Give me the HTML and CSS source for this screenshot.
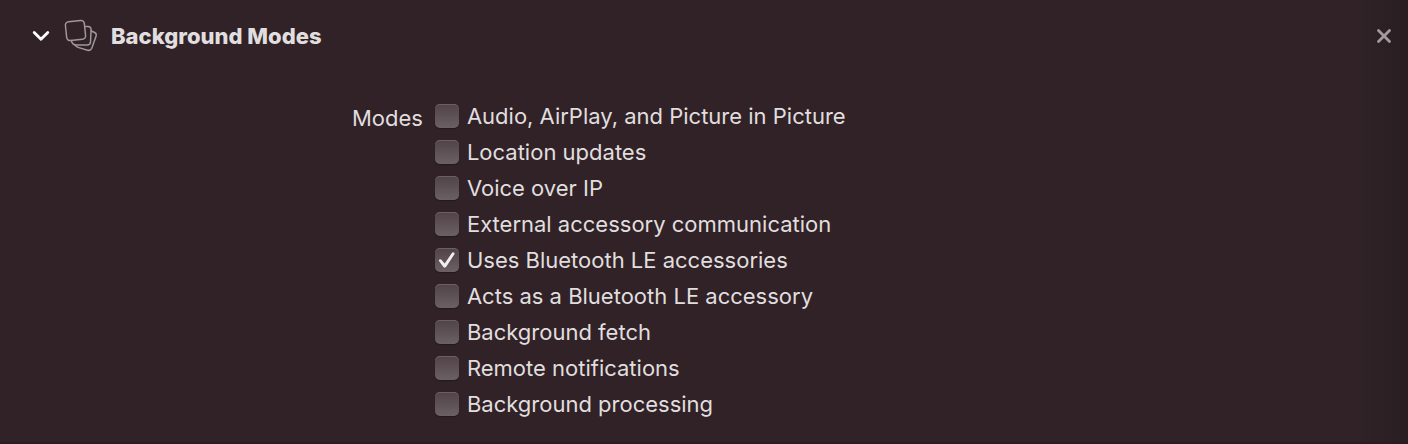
FILE: index.html
```html
<!DOCTYPE html>
<html lang="en">
<head>
<meta charset="utf-8">
<title>Background Modes</title>
<link rel="stylesheet" href="styles.css">
</head>
<body>
<section class="capability">
  <header class="header">
    <button class="icon-button toggle" type="button" aria-label="Collapse" aria-expanded="true">
      <svg width="18" height="12" viewBox="0 0 18 12" fill="none" stroke="#fff" stroke-width="2.8" stroke-linecap="round" stroke-linejoin="round"><path d="M2.200 2.400 9 9.300l6.800-6.900"/></svg>
    </button>
    <svg class="logo" width="34" height="34" viewBox="0 0 34 34" stroke="#a0979a" stroke-width="1.5" fill="none" stroke-linejoin="round" stroke-linecap="round">
      <rect x="2" y="2" width="19" height="19" rx="3.500" transform="rotate(-6 11.500 11.500)"/>
      <path d="M21.500 7.500h2.500q3.200.2 3.100 3.500l-.6 12q-.2 3-3.300 3H12q-3.500-.2-4.800-4.500"/>
      <path d="M27.200 12l3.500 1.500q2 1.200 1.400 3.500l-4.300 12.200q-1.200 2.800-4.300 2L14 28.400q-2.200-.7-3.200-2.900"/>
    </svg>
    <h1 class="title">Background Modes</h1>
    <button class="icon-button close" type="button" aria-label="Remove capability">
      <svg width="16" height="16" viewBox="0 0 16 16" fill="none" stroke="#a39b9e" stroke-width="2.800" stroke-linecap="round"><path d="M2.500 2.500l11 11M13.500 2.500l-11 11"/></svg>
    </button>
  </header>
  <div class="modes" role="group" aria-labelledby="modes-label">
    <div class="modes-label" id="modes-label">Modes</div>
    <div class="options">
      <label class="option"><input class="check" type="checkbox">Audio, AirPlay, and Picture in Picture</label>
      <label class="option"><input class="check" type="checkbox">Location updates</label>
      <label class="option"><input class="check" type="checkbox">Voice over IP</label>
      <label class="option"><input class="check" type="checkbox">External accessory communication</label>
      <label class="option"><input class="check" type="checkbox" checked>Uses Bluetooth LE accessories</label>
      <label class="option"><input class="check" type="checkbox">Acts as a Bluetooth LE accessory</label>
      <label class="option"><input class="check" type="checkbox">Background fetch</label>
      <label class="option"><input class="check" type="checkbox">Remote notifications</label>
      <label class="option"><input class="check" type="checkbox">Background processing</label>
    </div>
  </div>
</section>
</body>
</html>
```
FILE: styles.css
```css
* { box-sizing: border-box; }

body {
  margin: 0;
  background: #302227;
  color: #e0dedf;
  font-family: Inter, "Liberation Sans", sans-serif;
  font-size: 22px;
}

.capability {
  padding: 16px 16px 20px 32px;
  background: linear-gradient(to left, #291e22, #302227 50px);
  border-bottom: 2px solid #2b1b24;
}

.header {
  display: flex;
  align-items: center;
  height: 40px;
}

.icon-button {
  display: flex;
  padding: 0;
  border: 0;
  background: none;
}

.logo {
  margin-left: 14px;
}

.title {
  margin: 0 auto 0 13px;
  font-size: 22px;
  font-weight: 800;
  line-height: 28px;
}

.modes {
  display: grid;
  grid-template-columns: 29fr 71fr;
  column-gap: 12px;
  margin-top: 42px;
}

.modes-label {
  text-align: right;
  line-height: 36px;
  padding-top: 2px;
}

.option {
  display: flex;
  align-items: center;
  gap: 8px;
  height: 36px;
}

.check {
  appearance: none;
  display: grid;
  place-items: center;
  flex: none;
  width: 24px;
  height: 24px;
  margin: 0;
  border-radius: 5px;
  background: linear-gradient(#504348, #6b6064);
  box-shadow: inset 0 1px #6b6064, 0 1px 1px #231a1e;
}

.check:checked::before {
  content: "";
  width: 18px;
  height: 18px;
  background: #f0eeef;
  clip-path: path("M1.200 10.200Q.6 9.300 1.500 8.500Q2.600 7.700 3.500 8.700L6.800 12.600L14 1.900Q14.800.9 16 1.500Q17.100 2.300 16.400 3.500L8.300 15.800Q7 17.400 5.500 15.900Z");
}
```
